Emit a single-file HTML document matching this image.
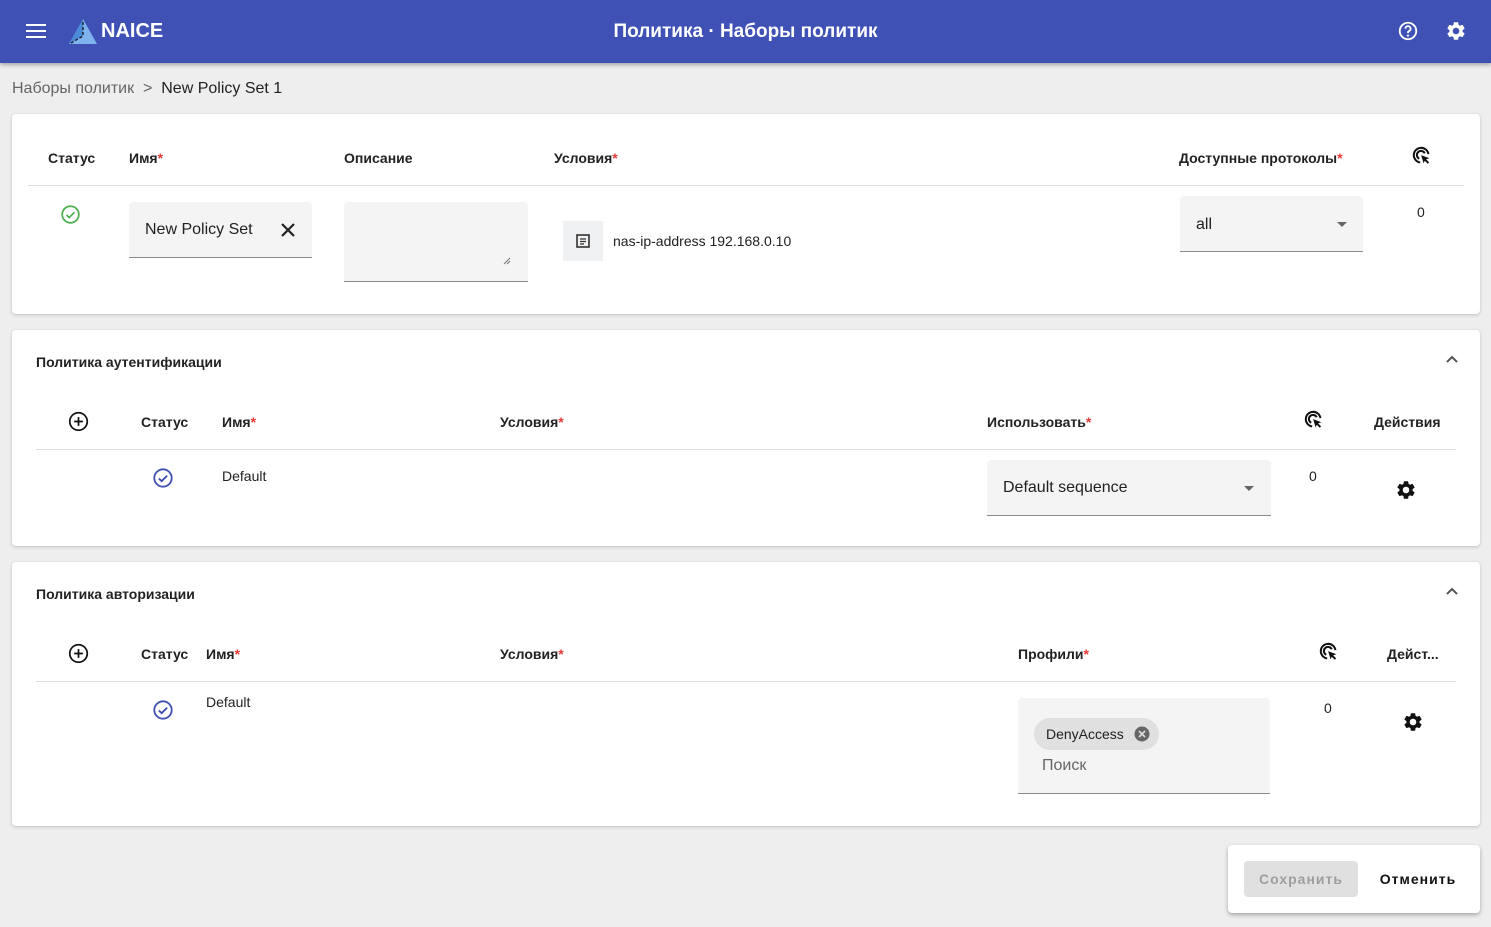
<!DOCTYPE html>
<html><head><meta charset="utf-8"><style>
*{box-sizing:border-box;margin:0;padding:0}
body{width:1491px;height:927px;background:#eeeeee;font-family:"Liberation Sans",sans-serif;position:relative;overflow:hidden;color:#212121}
.a{position:absolute}
.hdr{left:0;top:0;width:1491px;height:63px;background:#3f51b5;box-shadow:0 2px 4px rgba(0,0,0,.3)}
.card{background:#fff;border-radius:4px;box-shadow:0 1px 3px rgba(0,0,0,.2)}
.th{font-size:14px;font-weight:bold;color:#222}
.req{color:#e53935}
.line{height:1px;background:#e0e0e0}
.fld{background:#f4f4f4;border-bottom:1px solid #8a8a8a;border-radius:4px 4px 0 0}
.t14{font-size:14px}
</style></head><body>
<div class="a hdr"></div>
<svg class="a" style="left:26px;top:24px" width="20" height="14"><rect y="0" width="20" height="2" fill="#fff"/><rect y="6" width="20" height="2" fill="#fff"/><rect y="12" width="20" height="2" fill="#fff"/></svg>
<svg class="a" style="left:68px;top:18px" width="30" height="27"><polygon points="15,1 29,26 1,26" fill="#7fb3ee"/><polygon points="15,1 15,18 1,26" fill="#4a8ad8"/><polyline points="15,4 15,18 3,25 M15,18 27,25" stroke="#223" stroke-width="1.5" fill="none" stroke-dasharray="3,2"/></svg>
<div class="a" style="left:101px;top:20px;color:#fff;font-size:20px;font-weight:bold">NAICE</div>
<div class="a" style="left:0;width:1491px;top:21px;text-align:center;color:#fff;font-size:19px;font-weight:bold">Политика · Наборы политик</div>
<svg class="a" style="left:1397px;top:20px" width="22" height="22" viewBox="0 0 24 24"><circle cx="12" cy="12" r="9" fill="none" stroke="#fff" stroke-width="2"/><path d="M9.2 9.5a2.8 2.8 0 1 1 4 2.5c-.8.4-1.2 1-1.2 1.8v.5" fill="none" stroke="#fff" stroke-width="2"/><circle cx="12" cy="17" r="1.2" fill="#fff"/></svg>
<svg class="a" style="left:1445px;top:20px" width="22" height="22" viewBox="0 0 24 24"><path fill="#fff" d="M19.14 12.94c.04-.3.06-.61.06-.94s-.02-.64-.07-.94l2.03-1.58a.49.49 0 0 0 .12-.61l-1.92-3.32a.49.49 0 0 0-.59-.22l-2.39.96c-.5-.38-1.03-.7-1.62-.94l-.36-2.54a.48.48 0 0 0-.48-.41h-3.84c-.24 0-.43.17-.47.41l-.36 2.54c-.59.24-1.13.57-1.62.94l-2.39-.96a.48.48 0 0 0-.59.22L2.74 8.87c-.12.21-.08.47.12.61l2.03 1.58c-.05.3-.09.63-.09.94s.02.64.07.94l-2.03 1.58a.49.49 0 0 0-.12.61l1.920 3.32c.12.22.37.29.59.22l2.39-.96c.5.38 1.03.7 1.62.94l.36 2.54c.05.24.24.41.48.41h3.84c.24 0 .44-.17.47-.41l.36-2.54c.59-.24 1.13-.56 1.62-.94l2.39.96c.22.08.47 0 .59-.22l1.92-3.32c.12-.22.07-.47-.12-.61l-2.01-1.58zM12 15.6A3.6 3.6 0 1 1 12 8.4a3.6 3.6 0 0 1 0 7.2z"/></svg>
<div class="a" style="left:12px;top:80px;font-size:16px;color:#666">Наборы политик &nbsp;&gt;&nbsp; <span style="color:#212121">New Policy Set 1</span></div>

<div class="a card" style="left:12px;top:114px;width:1468px;height:200px"></div>
<div class="a th" style="left:48px;top:150px">Статус</div>
<div class="a th" style="left:129px;top:150px">Имя<span class="req">*</span></div>
<div class="a th" style="left:344px;top:150px">Описание</div>
<div class="a th" style="left:554px;top:150px">Условия<span class="req">*</span></div>
<div class="a th" style="left:1179px;top:150px">Доступные протоколы<span class="req">*</span></div>
<svg class="a" style="left:1411px;top:145px" width="22" height="22" viewBox="0 0 24 24"><path d="M10 19a8 8 0 1 1 9-9" fill="none" stroke="#111" stroke-width="2.2"/><path d="M9 15a4.5 4.5 0 1 1 6-6" fill="none" stroke="#111" stroke-width="2.2"/><path d="M11 11l9 3.5-3.5 1.2 3.3 3.3-1.5 1.5-3.3-3.3L13.8 20z" fill="#111"/></svg>
<div class="a line" style="left:28px;top:185px;width:1436px"></div>
<svg class="a" style="left:60px;top:204px" width="21" height="21" viewBox="0 0 24 24"><circle cx="12" cy="12" r="9.5" fill="none" stroke="#4caf50" stroke-width="2"/><path d="M7.5 12.5l3 3 6-6" fill="none" stroke="#4caf50" stroke-width="2"/></svg>
<div class="a fld" style="left:129px;top:202px;width:183px;height:56px"></div>
<div class="a" style="left:145px;top:221px;font-size:16px">New Policy Set</div>
<svg class="a" style="left:281px;top:223px" width="14" height="14"><path d="M1 1L13 13M13 1L1 13" stroke="#222" stroke-width="2.2"/></svg>
<div class="a fld" style="left:344px;top:202px;width:184px;height:80px"></div>
<svg class="a" style="left:503px;top:257px" width="8" height="8"><path d="M1 7L7 1M4 7L7 4" stroke="#777"/></svg>
<div class="a" style="left:563px;top:221px;width:40px;height:40px;background:#f0f1f3"></div>
<svg class="a" style="left:576px;top:234px" width="14" height="14"><rect x="1" y="1" width="12" height="12" fill="none" stroke="#333" stroke-width="1.6"/><path d="M4 5h6M4 7.5h6M4 10h4" stroke="#333" stroke-width="1.3"/></svg>
<div class="a t14" style="left:613px;top:233px">nas-ip-address 192.168.0.10</div>
<div class="a fld" style="left:1180px;top:196px;width:183px;height:56px"></div>
<div class="a" style="left:1196px;top:216px;font-size:16px">all</div>
<svg class="a" style="left:1337px;top:222px" width="10" height="5"><path d="M0 0h10L5 5z" fill="#666"/></svg>
<div class="a t14" style="left:1417px;top:204px">0</div>

<div class="a card" style="left:12px;top:330px;width:1468px;height:216px"></div>
<div class="a th" style="left:36px;top:354px">Политика аутентификации</div>
<svg class="a" style="left:1445px;top:354px" width="14" height="10"><path d="M2 8l5-5 5 5" fill="none" stroke="#555" stroke-width="2"/></svg>
<svg class="a" style="left:68px;top:411px" width="21" height="21" viewBox="0 0 24 24"><circle cx="12" cy="12" r="10" fill="none" stroke="#111" stroke-width="2"/><path d="M12 7v10M7 12h10" stroke="#111" stroke-width="2"/></svg>
<div class="a th" style="left:141px;top:414px">Статус</div>
<div class="a th" style="left:222px;top:414px">Имя<span class="req">*</span></div>
<div class="a th" style="left:500px;top:414px">Условия<span class="req">*</span></div>
<div class="a th" style="left:987px;top:414px">Использовать<span class="req">*</span></div>
<svg class="a" style="left:1303px;top:409px" width="22" height="22" viewBox="0 0 24 24"><path d="M10 19a8 8 0 1 1 9-9" fill="none" stroke="#111" stroke-width="2.2"/><path d="M9 15a4.5 4.5 0 1 1 6-6" fill="none" stroke="#111" stroke-width="2.2"/><path d="M11 11l9 3.5-3.5 1.2 3.3 3.3-1.5 1.5-3.3-3.3L13.8 20z" fill="#111"/></svg>
<div class="a th" style="left:1374px;top:414px">Действия</div>
<div class="a line" style="left:36px;top:449px;width:1420px"></div>
<svg class="a" style="left:152px;top:467px" width="22" height="22" viewBox="0 0 24 24"><circle cx="12" cy="12" r="9.5" fill="none" stroke="#3f51b5" stroke-width="2"/><path d="M7.5 12.5l3 3 6-6" fill="none" stroke="#3f51b5" stroke-width="2"/></svg>
<div class="a t14" style="left:222px;top:468px">Default</div>
<div class="a fld" style="left:987px;top:460px;width:284px;height:56px"></div>
<div class="a" style="left:1003px;top:479px;font-size:16px">Default sequence</div>
<svg class="a" style="left:1244px;top:486px" width="10" height="5"><path d="M0 0h10L5 5z" fill="#666"/></svg>
<div class="a t14" style="left:1309px;top:468px">0</div>
<svg class="a" style="left:1395px;top:479px" width="22" height="22" viewBox="0 0 24 24"><path fill="#111" d="M19.14 12.94c.04-.3.06-.61.06-.94s-.02-.64-.07-.94l2.03-1.58a.49.49 0 0 0 .12-.61l-1.92-3.32a.49.49 0 0 0-.59-.22l-2.39.96c-.5-.38-1.03-.7-1.62-.94l-.36-2.54a.48.48 0 0 0-.48-.41h-3.84c-.24 0-.43.17-.47.41l-.36 2.54c-.59.24-1.13.57-1.62.94l-2.39-.96a.48.48 0 0 0-.59.22L2.74 8.87c-.12.21-.08.47.12.61l2.03 1.58c-.05.3-.09.63-.09.94s.02.64.07.94l-2.03 1.58a.49.49 0 0 0-.12.61l1.92 3.32c.12.22.37.29.59.22l2.39-.96c.5.38 1.03.7 1.62.94l.36 2.54c.05.24.24.41.48.41h3.84c.24 0 .44-.17.47-.41l.36-2.54c.59-.24 1.13-.56 1.62-.94l2.39.96c.22.08.47 0 .59-.22l1.92-3.32c.12-.22.07-.47-.12-.61l-2.01-1.58zM12 15.6A3.6 3.6 0 1 1 12 8.4a3.6 3.6 0 0 1 0 7.2z"/></svg>

<div class="a card" style="left:12px;top:562px;width:1468px;height:264px"></div>
<div class="a th" style="left:36px;top:586px">Политика авторизации</div>
<svg class="a" style="left:1445px;top:586px" width="14" height="10"><path d="M2 8l5-5 5 5" fill="none" stroke="#555" stroke-width="2"/></svg>
<svg class="a" style="left:68px;top:643px" width="21" height="21" viewBox="0 0 24 24"><circle cx="12" cy="12" r="10" fill="none" stroke="#111" stroke-width="2"/><path d="M12 7v10M7 12h10" stroke="#111" stroke-width="2"/></svg>
<div class="a th" style="left:141px;top:646px">Статус</div>
<div class="a th" style="left:206px;top:646px">Имя<span class="req">*</span></div>
<div class="a th" style="left:500px;top:646px">Условия<span class="req">*</span></div>
<div class="a th" style="left:1018px;top:646px">Профили<span class="req">*</span></div>
<svg class="a" style="left:1318px;top:641px" width="22" height="22" viewBox="0 0 24 24"><path d="M10 19a8 8 0 1 1 9-9" fill="none" stroke="#111" stroke-width="2.2"/><path d="M9 15a4.5 4.5 0 1 1 6-6" fill="none" stroke="#111" stroke-width="2.2"/><path d="M11 11l9 3.5-3.5 1.2 3.3 3.3-1.5 1.5-3.3-3.3L13.8 20z" fill="#111"/></svg>
<div class="a th" style="left:1387px;top:646px">Дейст...</div>
<div class="a line" style="left:36px;top:681px;width:1420px"></div>
<svg class="a" style="left:152px;top:699px" width="22" height="22" viewBox="0 0 24 24"><circle cx="12" cy="12" r="9.5" fill="none" stroke="#3f51b5" stroke-width="2"/><path d="M7.5 12.5l3 3 6-6" fill="none" stroke="#3f51b5" stroke-width="2"/></svg>
<div class="a t14" style="left:206px;top:694px">Default</div>
<div class="a fld" style="left:1018px;top:698px;width:252px;height:96px"></div>
<div class="a" style="left:1034px;top:718px;width:125px;height:32px;border-radius:16px;background:#e0e0e0"></div>
<div class="a t14" style="left:1046px;top:726px">DenyAccess</div>
<svg class="a" style="left:1134px;top:726px" width="16" height="16"><circle cx="8" cy="8" r="7.5" fill="#666"/><path d="M5 5l6 6M11 5l-6 6" stroke="#e0e0e0" stroke-width="1.6"/></svg>
<div class="a" style="left:1042px;top:757px;font-size:16px;color:#666">Поиск</div>
<div class="a t14" style="left:1324px;top:700px">0</div>
<svg class="a" style="left:1402px;top:711px" width="22" height="22" viewBox="0 0 24 24"><path fill="#111" d="M19.14 12.94c.04-.3.06-.61.06-.94s-.02-.64-.07-.94l2.03-1.58a.49.49 0 0 0 .12-.61l-1.92-3.32a.49.49 0 0 0-.59-.22l-2.39.96c-.5-.38-1.03-.7-1.62-.94l-.36-2.54a.48.48 0 0 0-.48-.41h-3.84c-.24 0-.43.17-.47.41l-.36 2.54c-.59.24-1.13.57-1.62.94l-2.39-.96a.48.48 0 0 0-.59.22L2.74 8.87c-.12.21-.08.47.12.61l2.03 1.58c-.05.3-.09.63-.09.94s.02.64.07.94l-2.03 1.58a.49.49 0 0 0-.12.61l1.92 3.32c.12.22.37.29.59.22l2.39-.96c.5.38 1.03.7 1.62.94l.36 2.54c.05.24.24.41.48.41h3.84c.24 0 .44-.17.47-.41l.36-2.54c.59-.24 1.13-.56 1.62-.94l2.39.96c.22.08.47 0 .59-.22l1.92-3.32c.12-.22.07-.47-.12-.61l-2.01-1.58zM12 15.6A3.6 3.6 0 1 1 12 8.4a3.6 3.6 0 0 1 0 7.2z"/></svg>

<div class="a card" style="left:1228px;top:845px;width:252px;height:68px;box-shadow:0 2px 4px rgba(0,0,0,.3)"></div>
<div class="a" style="left:1244px;top:861px;width:114px;height:36px;background:#e0e0e0;border-radius:4px"></div>
<div class="a" style="left:1244px;top:871px;width:114px;text-align:center;font-size:14px;font-weight:bold;color:#9e9e9e;letter-spacing:1px">Сохранить</div>
<div class="a" style="left:1368px;top:871px;width:100px;text-align:center;font-size:14px;font-weight:bold;color:#111;letter-spacing:1px">Отменить</div>
</body></html>
